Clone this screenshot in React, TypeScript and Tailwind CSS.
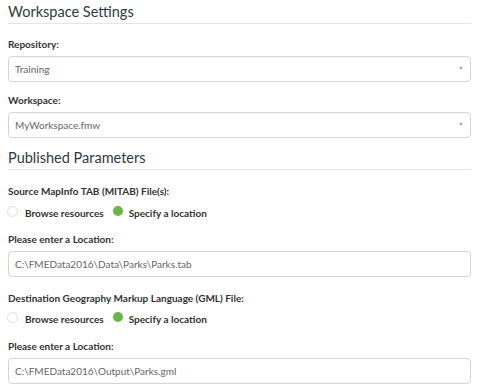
const font = { fontFamily: "Lato, 'Noto Sans', sans-serif" };

function Heading({ children }: { children: string }) {
  return (
    <div className="border-b border-[#e5e5e5] pb-[2px] text-[14.5px] leading-[18px] text-[#2f3a44]">
      {children}
    </div>
  );
}

function Label({ children }: { children: string }) {
  return (
    <div className="text-[10px] font-bold leading-[14px] text-[#333]">{children}</div>
  );
}

function Select({ value }: { value: string }) {
  return (
    <div className="flex h-[26px] items-center justify-between rounded-[4px] border border-[#d4d4d4] bg-white pl-[6px] pr-[7px] text-[10px] text-[#666]">
      <span>{value}</span>
      <span className="h-0 w-0 -translate-y-[1px] border-l-[2.5px] border-r-[2.5px] border-t-[3px] border-l-transparent border-r-transparent border-t-[#aaa]" />
    </div>
  );
}

function Input({ value }: { value: string }) {
  return (
    <div className="flex h-[26px] items-center rounded-[4px] border border-[#d4d4d4] bg-white px-[6px] text-[10px] text-[#666]">
      {value}
    </div>
  );
}

function Radios() {
  return (
    <div className="flex h-[14px] items-center text-[10px] font-bold leading-[14px] text-[#333]">
      <span className="ml-[-1px] h-[11px] w-[11px] -translate-y-[2px] rounded-full border border-[#ddd] bg-white" />
      <span className="ml-[7px]">Browse resources</span>
      <span className="ml-[9px] h-[10px] w-[10px] -translate-y-[2px] rounded-full bg-[#6bb547]" />
      <span className="ml-[6px]">Specify a location</span>
    </div>
  );
}

export default function App() {
  return (
    <div style={font} className="h-[391px] w-[483px] bg-white pl-[8px] pr-[12px] pt-[3px]">
      <Heading>Workspace Settings</Heading>
      <div className="mt-[13px]">
        <Label>Repository:</Label>
      </div>
      <div className="mt-[5px]">
        <Select value="Training" />
      </div>
      <div className="mt-[11px]">
        <Label>Workspace:</Label>
      </div>
      <div className="mt-[5px]">
        <Select value="MyWorkspace.fmw" />
      </div>
      <div className="mt-[11px]">
        <Heading>Published Parameters</Heading>
      </div>
      <div className="mt-[14px]">
        <Label>Source MapInfo TAB (MITAB) File(s):</Label>
      </div>
      <div className="mt-[8px]">
        <Radios />
      </div>
      <div className="mt-[12px]">
        <Label>Please enter a Location:</Label>
      </div>
      <div className="mt-[5px]">
        <Input value="C:\FMEData2016\Data\Parks\Parks.tab" />
      </div>
      <div className="mt-[14px]">
        <Label>Destination Geography Markup Language (GML) File:</Label>
      </div>
      <div className="mt-[7px]">
        <Radios />
      </div>
      <div className="mt-[13px]">
        <Label>Please enter a Location:</Label>
      </div>
      <div className="mt-[5px]">
        <Input value="C:\FMEData2016\Output\Parks.gml" />
      </div>
    </div>
  );
}
